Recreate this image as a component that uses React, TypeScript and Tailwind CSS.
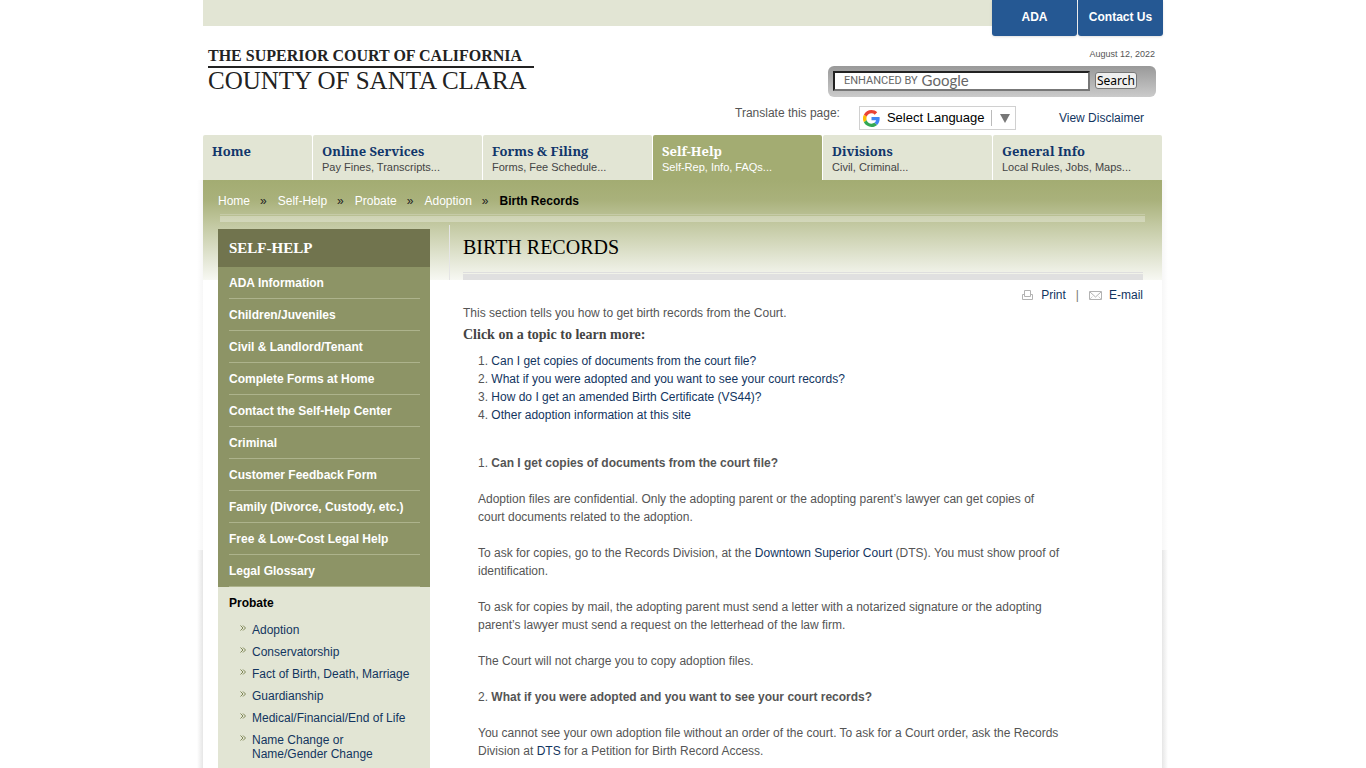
import { Fragment } from 'react';

const NAV_ITEMS = [
  { title: 'Home', sub: '', width: 'w-[109px]' },
  { title: 'Online Services', sub: 'Pay Fines, Transcripts...', width: 'flex-1' },
  { title: 'Forms & Filing', sub: 'Forms, Fee Schedule...', width: 'flex-1' },
  { title: 'Self-Help', sub: 'Self-Rep, Info, FAQs...', width: 'flex-1', active: true },
  { title: 'Divisions', sub: 'Civil, Criminal...', width: 'flex-1' },
  { title: 'General Info', sub: 'Local Rules, Jobs, Maps...', width: 'flex-1' },
];

const BREADCRUMBS = ['Home', 'Self-Help', 'Probate', 'Adoption'];

const SIDEBAR_ITEMS = [
  'ADA Information',
  'Children/Juveniles',
  'Civil & Landlord/Tenant',
  'Complete Forms at Home',
  'Contact the Self-Help Center',
  'Criminal',
  'Customer Feedback Form',
  'Family (Divorce, Custody, etc.)',
  'Free & Low-Cost Legal Help',
  'Legal Glossary',
];

const PROBATE_ITEMS = [
  'Adoption',
  'Conservatorship',
  'Fact of Birth, Death, Marriage',
  'Guardianship',
  'Medical/Financial/End of Life',
  'Name Change or Name/Gender Change',
];

const TOPICS = [
  'Can I get copies of documents from the court file?',
  'What if you were adopted and you want to see your court records?',
  'How do I get an amended Birth Certificate (VS44)?',
  'Other adoption information at this site',
];

function GoogleIcon() {
  return (
    <svg className="h-[17px] w-[17px] shrink-0" viewBox="0 0 48 48" aria-hidden="true">
      <path fill="#ea4335" d="M24 9.5c3.5 0 6.7 1.2 9.2 3.6l6.9-6.9C35.9 2.4 30.5 0 24 0 14.6 0 6.5 5.4 2.6 13.2l8 6.2C12.4 13.7 17.7 9.5 24 9.5z" />
      <path fill="#4285f4" d="M47 24.6c0-1.6-.2-3.1-.4-4.6H24v9h12.9c-.6 3-2.3 5.5-4.8 7.2l7.7 6C44.4 38 47 31.8 47 24.6z" />
      <path fill="#fbbc05" d="M10.5 28.6a14.5 14.5 0 0 1 0-9.2l-8-6.2a24 24 0 0 0 0 21.6z" />
      <path fill="#34a853" d="M24 48c6.5 0 11.9-2.1 15.9-5.8l-7.7-6c-2.2 1.5-5 2.3-8.2 2.3-6.3 0-11.6-4.2-13.5-9.9l-8 6.2C6.5 42.6 14.6 48 24 48z" />
    </svg>
  );
}

function PrintIcon() {
  return (
    <svg className="h-[10px] w-[11px]" viewBox="0 0 11 10" fill="none" stroke="#b3b3b3" aria-hidden="true">
      <path d="M2.5 4.5h-2v5h10v-5h-2" />
      <path d="M2.5 6.5v-6h6v6z" />
    </svg>
  );
}

function MailIcon() {
  return (
    <svg className="h-[9px] w-[13px]" viewBox="0 0 13 9" fill="none" stroke="#b3b3b3" aria-hidden="true">
      <path d="M.5.5h12v8H.5z" />
      <path d="M1 1l5.5 5L12 1" />
      <path d="M1 8l2.5-2.5M12 8L9.5 5.5" strokeOpacity="0.6" />
    </svg>
  );
}

function DoubleArrow() {
  return (
    <svg className="mt-[2px] h-[6px] w-[6px] shrink-0" viewBox="0 0 6 6" fill="none" stroke="#7f8656" aria-hidden="true">
      <path d="M.5.5L3 3 .5 5.5M3 .5L5.5 3 3 5.5" />
    </svg>
  );
}

function Header() {
  return (
    <header>
      <div className="flex h-[26px] items-start justify-end bg-[#e2e5d4]">
        <div className="flex gap-px bg-white">
          <a href="#ada" className="flex h-9 w-[85px] items-center justify-center rounded-b-[3px] bg-[#255893] pb-0.5 text-[12px] font-bold text-white shadow-sm">
            ADA
          </a>
          <a href="#contact" className="flex h-9 w-[85px] items-center justify-center rounded-b-[3px] bg-[#255893] pb-0.5 text-[12px] font-bold text-white shadow-sm">
            Contact Us
          </a>
        </div>
      </div>

      <div className="flex h-[109px] justify-between">
        {/* Court name */}
        <a href="#home" className="ml-[5px] mt-5 w-[326px] self-start whitespace-nowrap font-['Liberation_Serif',serif] text-[#222]">
          <span className="block border-b-2 border-[#222] pb-px text-[16px] leading-[19px] font-bold">
            THE SUPERIOR COURT OF CALIFORNIA
          </span>
          <span className="block text-[25px] leading-[26px]">COUNTY OF SANTA CLARA</span>
        </a>

        <div className="flex w-[428px] flex-col items-end pr-[7px] pt-5">
          <p className="pr-px text-[9px] leading-4 text-[#555]">August 12, 2022</p>
          <form
            onSubmit={(e) => e.preventDefault()}
            className="mt-1 flex h-[31px] w-[328px] items-center gap-[5px] rounded-md bg-gradient-to-b from-[#999] to-[#cbcbcb] px-[5px] pb-0.5"
          >
            <div className="relative h-5 flex-1">
              <input
                type="text"
                aria-label="Search"
                className="block h-5 w-full border-2 border-t-[#222] border-r-[#777] border-b-[#777] border-l-[#222] bg-white px-2 text-[12px]"
              />
              <span className="pointer-events-none absolute left-[11px] top-0 flex items-start gap-1 font-['Roboto',sans-serif] text-[#666]">
                <span className="text-[11px] leading-5">ENHANCED BY</span>
                <span className="font-['Lato',sans-serif] text-[15px] leading-[18px]">Google</span>
              </span>
            </div>
            <button
              type="submit"
              className="mr-[14px] h-[17px] w-[42px] rounded-[3px] border border-[#777] bg-[#efefef] text-center font-['Noto_Sans',sans-serif] text-[12px] leading-[14px] text-black"
            >
              Search
            </button>
          </form>
          <div className="mt-2 flex w-full items-center">
            <label htmlFor="language" className="mb-2.5 text-[12px] leading-4 text-[#555]">
              Translate this page:
            </label>
            <div className="relative ml-[19px] flex h-6 w-[157px] items-center border border-[#d0d0d0] bg-white pl-[3px]">
              <GoogleIcon />
              <select
                id="language"
                className="ml-[7px] h-5 flex-1 appearance-none bg-transparent text-[13px] leading-5 text-black"
              >
                <option>Select Language</option>
              </select>
              <span className="pointer-events-none absolute right-[5px] top-[3px] flex h-4 items-center border-l border-[#bbb] pl-2">
                <svg className="h-[9px] w-[10px]" viewBox="0 0 10 9" fill="#777" aria-hidden="true">
                  <path d="M0 0h10L5 9z" />
                </svg>
              </span>
            </div>
            <a href="#disclaimer" className="ml-[43px] text-[12px] leading-4 text-[#12355f]">
              View Disclaimer
            </a>
          </div>
        </div>
      </div>

      <nav className="mr-px flex h-[45px] gap-px">
        {NAV_ITEMS.map((item) => (
          <a
            key={item.title}
            href={`#${item.title}`}
            className={`${item.width} rounded-t-[2px] pl-[9px] pt-2 ${
              item.active ? 'bg-[#a3ac72] text-white' : 'bg-[#e2e5d4] text-[#11366b]'
            }`}
          >
            <span className="block font-['Noto_Serif','DejaVu_Serif',serif] text-[13px] leading-[17px] font-bold">{item.title}</span>
            <span className={`block text-[11px] leading-[14px] ${item.active ? 'text-white' : 'text-[#444]'}`}>
              {item.sub}
            </span>
          </a>
        ))}
      </nav>
    </header>
  );
}

function Sidebar() {
  return (
    <aside className="mt-1 w-[212px] shrink-0 self-stretch bg-[#e2e5d4]">
      <h2 className="bg-[#71744e] px-[11px] font-['Liberation_Serif',serif] text-[15px] leading-[38px] font-bold text-white">
        SELF-HELP
      </h2>
      <ul className="bg-[#8d9466] pl-[11px] pr-[10px]">
        {SIDEBAR_ITEMS.map((item) => (
          <li key={item} className="h-8 border-b border-[#adb38c] pt-px">
            <a href="#topic" className="block whitespace-nowrap text-[12px] leading-[30px] font-bold text-white">
              {item}
            </a>
          </li>
        ))}
      </ul>
      <div className="px-[11px] pb-10">
        <a href="#probate" className="block text-[12px] leading-8 font-bold text-black">
          Probate
        </a>
        <ul className="flex flex-col gap-2 pl-[11px] pt-1">
          {PROBATE_ITEMS.map((item) => (
            <li key={item} className="flex gap-[6px]">
              <DoubleArrow />
              <a href="#subtopic" className="max-w-[160px] text-[12px] leading-[14px] text-[#12355f]">
                {item}
              </a>
            </li>
          ))}
        </ul>
      </div>
    </aside>
  );
}

function Content() {
  return (
    <main className="ml-[19px] min-w-0 flex-1">
      <div className="border-l border-[#e5e5e5] pl-[13px] pt-2">
        <h1 className="font-['Liberation_Serif',serif] text-[20px] leading-7 text-black">BIRTH RECORDS</h1>
        <div className="mt-[11px] border-t border-[#dedede] pt-px">
          <div className="h-1.5 bg-[#e0e0e0]" />
        </div>
      </div>

      <div className="pl-[14px] text-[12px] leading-[18px] text-[#555]">
        <div className="flex items-center justify-end pt-1.5 text-[#12355f]">
          <PrintIcon />
          <a href="#print" className="ml-2">Print</a>
          <span className="mx-[10px] text-[#777]">|</span>
          <MailIcon />
          <a href="#email" className="ml-[7px]">E-mail</a>
        </div>
        <p>This section tells you how to get birth records from the Court.</p>
        <h2 className="mt-1 font-['Liberation_Serif',serif] text-[14px] leading-[18px] font-bold text-[#444]">
          Click on a topic to learn more:
        </h2>
        <ol className="mt-2 pl-[15px]">
          {TOPICS.map((topic, i) => (
            <li key={topic}>
              {i + 1}. <a href="#answer" className="text-[#12355f]">{topic}</a>
            </li>
          ))}
        </ol>

        <div className="mt-[30px] flex max-w-[600px] flex-col gap-[18px] pl-[15px] pb-6">
          <h3>
            1. <strong>{TOPICS[0]}</strong>
          </h3>
          <p>
            Adoption files are confidential. Only the adopting parent or the adopting parent’s lawyer can get copies of
            court documents related to the adoption.
          </p>
          <p>
            To ask for copies, go to the Records Division, at the{' '}
            <a href="#dts" className="text-[#12355f]">Downtown Superior Court</a> (DTS). You must show proof of
            identification.
          </p>
          <p>
            To ask for copies by mail, the adopting parent must send a letter with a notarized signature or the adopting
            parent’s lawyer must send a request on the letterhead of the law firm.
          </p>
          <p>The Court will not charge you to copy adoption files.</p>
          <h3>
            2. <strong>{TOPICS[1]}</strong>
          </h3>
          <p>
            You cannot see your own adoption file without an order of the court. To ask for a Court order, ask the Records
            Division at <a href="#dts" className="text-[#12355f]">DTS</a> for a Petition for Birth Record Access.
          </p>
        </div>
      </div>
    </main>
  );
}

export default function App() {
  return (
    <div className="min-h-screen bg-white font-['Liberation_Sans',Arial,sans-serif]">
      <div className="relative mx-auto max-w-[960px]">
        {/* Page edge shadows */}
        <div className="absolute top-[180px] bottom-0 -left-1.5 w-1.5 bg-gradient-to-l from-[#f7f7f7] to-white" />
        <div className="absolute top-[180px] bottom-0 -right-[5px] w-1.5 bg-gradient-to-r from-[#f7f7f7] to-white" />
        <div className="absolute top-[550px] bottom-0 -left-1.5 w-1.5 bg-gradient-to-l from-[#e6e6e6] to-white" />
        <div className="absolute top-[550px] bottom-0 -right-[5px] w-1.5 bg-gradient-to-r from-[#e6e6e6] to-white" />

        <Header />

        <div className="mr-px bg-[linear-gradient(to_bottom,#a3ac72_0%,#a9b17b_20%,#c3c9a2_45%,#f7f8f3_100%)] bg-[length:100%_100px] bg-no-repeat px-[15px]">
          <div className="pt-3">
            <nav aria-label="Breadcrumb" className="flex text-[12px] leading-[18px]">
              {BREADCRUMBS.map((crumb) => (
                <Fragment key={crumb}>
                  <a href="#crumb" className="text-white">{crumb}</a>
                  <span className="ml-[10px] mr-[11px] text-[#222]">»</span>
                </Fragment>
              ))}
              <span className="font-bold text-black">Birth Records</span>
            </nav>
            <div className="ml-0.5 mt-1 mr-0.5 border-t border-white/20 pt-px">
              <div className="h-1.5 bg-white/30" />
            </div>
          </div>
          <div className="mt-[3px] flex pr-1">
            <Sidebar />
            <Content />
          </div>
        </div>
      </div>
    </div>
  );
}
